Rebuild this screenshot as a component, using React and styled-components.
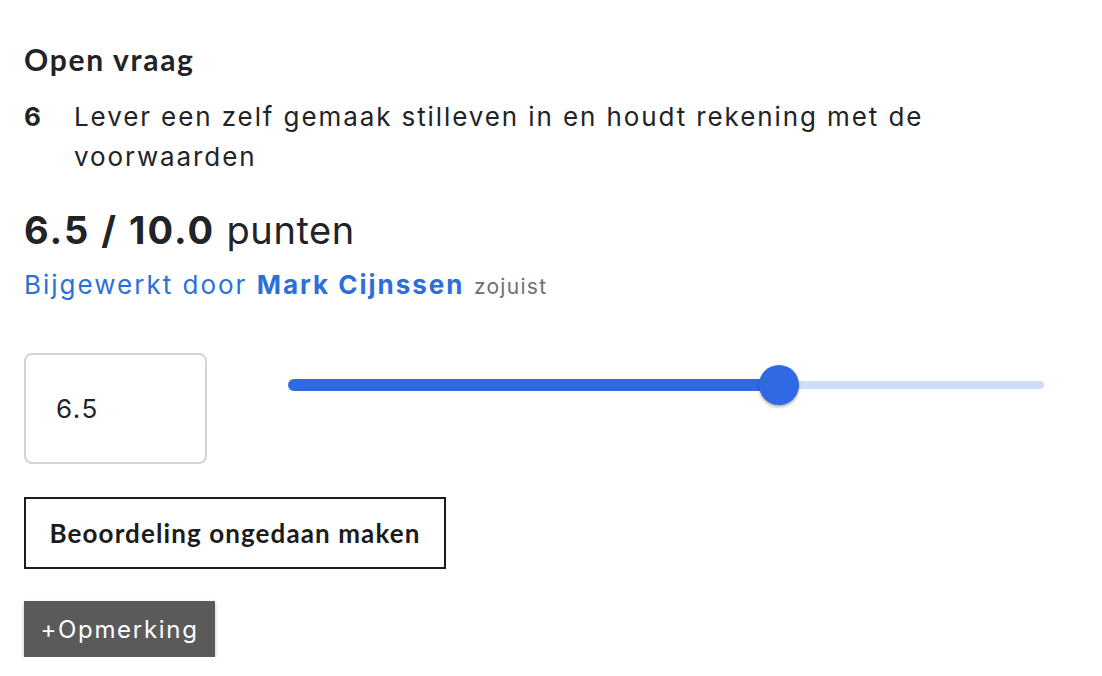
import styled, { createGlobalStyle } from "styled-components";

const GlobalStyle = createGlobalStyle`
  html, body {
    margin: 0;
    padding: 0;
    background: #ffffff;
  }
  body {
    font-family: "Inter", "Open Sans", sans-serif;
    color: #222326;
  }
`;

const Page = styled.div`
  padding: 39px 24px 0 24px;
  width: 1020px;
`;

const Title = styled.h3`
  margin: 0;
  font-family: "Lato", sans-serif;
  font-weight: 700;
  font-size: 30px;
  line-height: 40px;
  letter-spacing: 1.7px;
  color: #222326;
`;

const Question = styled.div`
  display: flex;
  margin-top: 18px;
  font-size: 26px;
  line-height: 40px;
  letter-spacing: 1.9px;
  font-weight: 400;
`;

const Number = styled.span`
  width: 50px;
  flex: none;
  font-weight: 700;
  letter-spacing: 0;
`;

const QuestionText = styled.p`
  margin: 0;
  width: 900px;
`;

const Score = styled.div`
  margin-top: 28px;
  font-size: 38px;
  line-height: 50px;
  letter-spacing: 0.6px;
  b {
    font-weight: 700;
    letter-spacing: 2px;
  }
`;

const Updated = styled.div`
  margin-top: 13px;
  font-size: 26px;
  line-height: 34px;
  color: #2d6fd9;
  letter-spacing: 2px;
  b {
    font-weight: 700;
  }
  small {
    font-size: 21px;
    letter-spacing: 1.3px;
    color: #6b6f76;
  }
`;

const GradeRow = styled.div`
  display: flex;
  align-items: flex-start;
  margin-top: 49px;
`;

const GradeInput = styled.div`
  box-sizing: border-box;
  width: 183px;
  height: 111px;
  border: 2px solid #d4d4d4;
  border-radius: 8px;
  padding-left: 30px;
  display: flex;
  align-items: center;
  font-size: 26px;
  letter-spacing: 1.6px;
`;

const Slider = styled.div`
  position: relative;
  margin: 12px 0 0 81px;
  width: 756px;
  height: 40px;
  display: flex;
  align-items: center;
`;

const TrackRest = styled.div`
  flex: 1;
  height: 8px;
  border-radius: 4px;
  background: #d0ddf8;
`;

const TrackFill = styled.div`
  position: absolute;
  left: 0;
  top: 14px;
  height: 12px;
  border-radius: 6px;
  background: #2f69e4;
`;

const Thumb = styled.div`
  position: absolute;
  top: 0;
  width: 40px;
  height: 40px;
  margin-left: -20px;
  border-radius: 50%;
  background: #2f69e4;
  box-shadow: 0 2px 3px rgba(0, 0, 0, 0.3);
`;

const OutlineButton = styled.button`
  display: block;
  margin-top: 33px;
  box-sizing: border-box;
  width: 422px;
  height: 72px;
  background: #ffffff;
  border: 2px solid #1c1c1c;
  font-family: "Lato", sans-serif;
  font-weight: 700;
  font-size: 26px;
  color: #1c1c1c;
  letter-spacing: 1.1px;
`;

const CommentButton = styled.button`
  display: block;
  margin-top: 32px;
  box-sizing: border-box;
  width: 191px;
  height: 56px;
  padding: 0;
  background: #5a5a5a;
  border: none;
  box-shadow: 0 2px 4px rgba(0, 0, 0, 0.25);
  font-family: "Inter", sans-serif;
  font-size: 24px;
  color: #ffffff;
  letter-spacing: 1.7px;
`;

export default function App() {
  const value = 6.5;
  const pct = ((779 - 288) / 756) * 100;
  return (
    <>
      <GlobalStyle />
      <Page>
        <Title>Open vraag</Title>
        <Question>
          <Number>6</Number>
          <QuestionText>
            Lever een zelf gemaak stilleven in en houdt rekening met de voorwaarden
          </QuestionText>
        </Question>
        <Score>
          <b>{value} / 10.0</b> punten
        </Score>
        <Updated>
          Bijgewerkt door <b>Mark Cijnssen</b> <small>zojuist</small>
        </Updated>
        <GradeRow>
          <GradeInput>{value}</GradeInput>
          <Slider>
            <TrackRest />
            <TrackFill style={{ width: `${pct}%` }} />
            <Thumb style={{ left: `${pct}%` }} />
          </Slider>
        </GradeRow>
        <OutlineButton>Beoordeling ongedaan maken</OutlineButton>
        <CommentButton>+Opmerking</CommentButton>
      </Page>
    </>
  );
}
